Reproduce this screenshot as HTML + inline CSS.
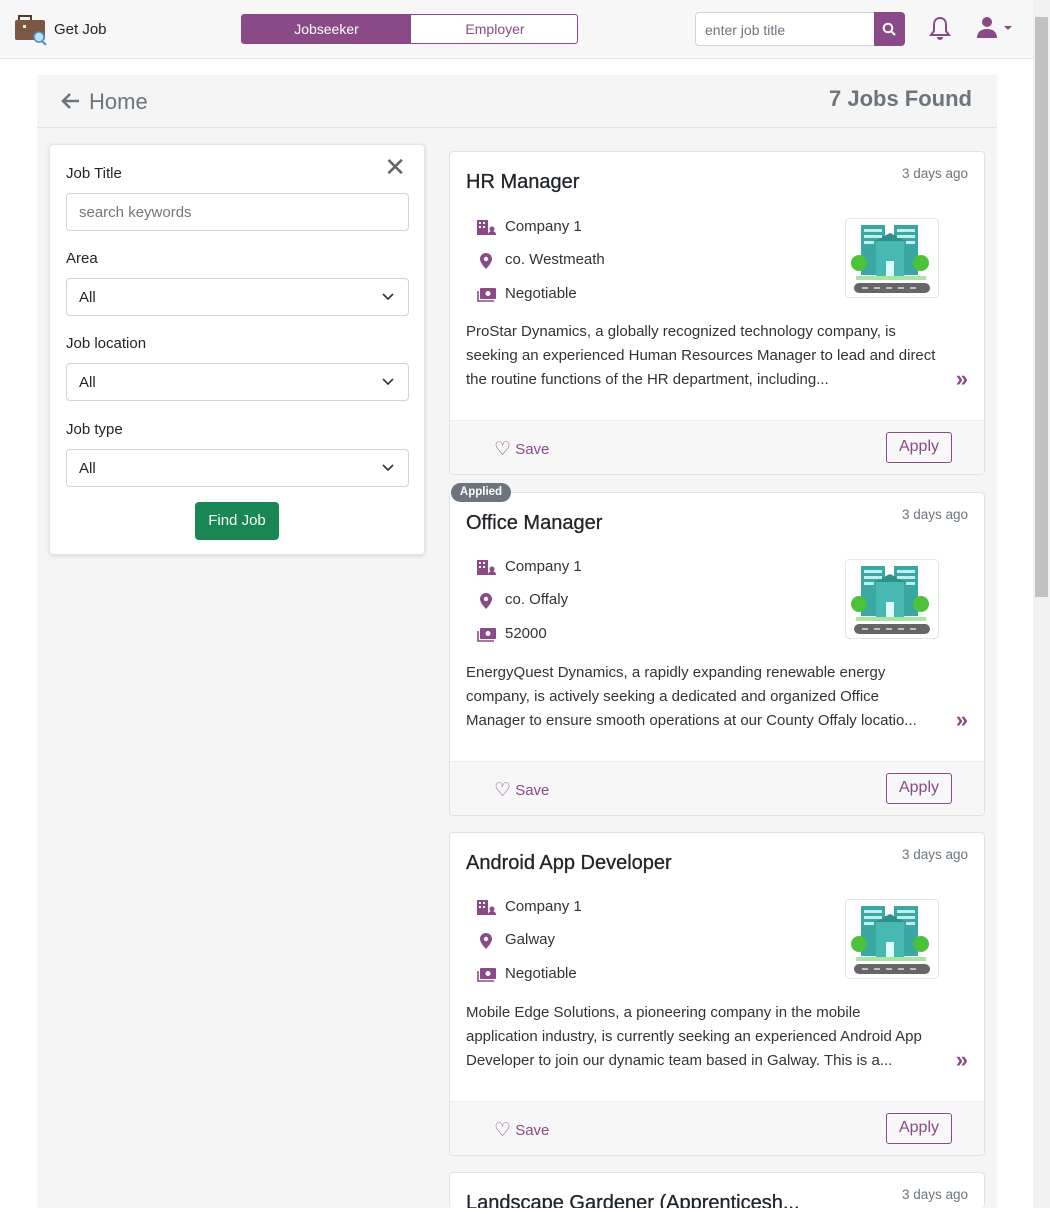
<!DOCTYPE html>
<html style="width:1050px;height:1208px;overflow:hidden"><head><meta charset="utf-8"><style>
*{box-sizing:border-box;margin:0;padding:0}
body{width:1050px;height:1208px;overflow:hidden;font-family:"Liberation Sans",sans-serif;background:#fff;color:#212529;position:relative}
.sb{position:absolute;right:0;top:0;width:17px;height:1208px;background:#f1f1f1;z-index:5}
.sb div{position:absolute;left:2px;top:17px;width:13px;height:580px;background:#c1c1c1}
.nav{position:absolute;left:0;top:0;width:1033px;height:59px;background:#f7f7f8;border-bottom:1px solid #e3e3e6}
.abs{position:absolute}
.main{position:absolute;left:37px;top:75px;width:960px;height:1133px;background:#f5f5f6}
.hdr{position:absolute;left:0;top:0;width:960px;height:53px;border-bottom:1px solid #e2e2e4}
.side{position:absolute;left:12px;top:69px;width:376px;height:411px;background:#fff;border:1px solid #e5e5e5;box-shadow:0 1px 4px rgba(0,0,0,.12);border-radius:4px}
.lbl{position:absolute;left:16px;font-size:15px;color:#212529}
.inp{position:absolute;left:16px;width:343px;height:38px;border:1px solid #ced4da;border-radius:4px;font-size:15px;padding:10px 12px;color:#212529}
.card{position:absolute;left:412px;width:536px;height:324px;background:#fff;border:1px solid #e0e0e0;border-radius:4px;overflow:hidden}
.card h2{position:absolute;left:16px;top:19px;font-size:20px;font-weight:normal;color:#212529;-webkit-text-stroke:.3px #212529}
.ago{position:absolute;right:16px;top:14px;font-size:13.5px;color:#6c757d}
.row{position:absolute;left:27px;font-size:15px;color:#333}
.row svg{position:absolute;left:0;top:1px}
.row span{position:absolute;left:28px;top:0;white-space:nowrap}
.desc{position:absolute;left:16px;top:168px;width:470px;font-size:15px;line-height:24px;color:#333;display:-webkit-box;-webkit-line-clamp:3;-webkit-box-orient:vertical;overflow:hidden;max-height:72px}
.chev{position:absolute;right:16px;top:214px;color:#8a4a87;font-size:22px;font-weight:bold}
.ft{position:absolute;left:0;bottom:0;width:534px;height:54px;background:#f7f7f8;border-top:1px solid #eee}
.save{position:absolute;left:44px;top:17px;font-size:15px;color:#8a4a87}
.save b{font-size:19px;font-weight:normal;vertical-align:-1px}
.apply{position:absolute;right:32px;top:11px;width:66px;height:31px;border:1px solid #8a4a87;border-radius:3px;font-size:16px;color:#8a4a87;text-align:center;line-height:28px}
.logo{position:absolute;right:45px;top:66px;width:94px;height:80px;border:1px solid #e6e6e6;border-radius:4px}
</style></head><body>
<div class="nav">
 <svg class="abs" style="left:14px;top:14px" width="34" height="32" viewBox="0 0 34 32"><rect x="5" y="2" width="12" height="5" fill="none" stroke="#5a3b2b" stroke-width="2"/><rect x="1" y="6" width="30" height="20" rx="2" fill="#7b5844"/><rect x="9" y="11" width="3" height="3" fill="#eee"/><circle cx="25" cy="23" r="5" fill="#bfe0f5" stroke="#4a90c8" stroke-width="1.5"/><line x1="28" y1="27" x2="32" y2="31" stroke="#4a90c8" stroke-width="2"/></svg>
 <div class="abs" style="left:54px;top:21px;font-size:15px">Get Job</div>
 <div class="abs" style="left:241px;top:14px;width:337px;height:30px;border:1px solid #8a4a87;border-radius:3px;background:#fff;overflow:hidden">
  <div class="abs" style="left:0;top:0;width:169px;height:30px;background:#8a4a87;color:#fff;font-size:14px;text-align:center;line-height:29px">Jobseeker</div>
  <div class="abs" style="left:169px;top:0;width:168px;height:30px;color:#8a4a87;font-size:14px;text-align:center;line-height:29px">Employer</div>
 </div>
 <div class="abs" style="left:695px;top:12px;width:180px;height:34px;border:1px solid #ced4da;border-right:none;border-radius:4px 0 0 4px;background:#fff;font-size:14px;color:#6c757d;padding:9px 9px">enter job title</div>
 <div class="abs" style="left:874px;top:12px;width:31px;height:34px;background:#8a4a87;border-radius:0 4px 4px 0"><svg style="position:absolute;left:8px;top:10px" width="15" height="15" viewBox="0 0 15 15"><circle cx="6" cy="6" r="4.3" fill="none" stroke="#fff" stroke-width="2"/><line x1="9" y1="9" x2="13" y2="13" stroke="#fff" stroke-width="2.2"/></svg></div>
 <svg class="abs" style="left:929px;top:16px" width="22" height="26" viewBox="0 0 22 26"><path d="M11 2c-4 0-6 3-6 7v6l-3 4h18l-3-4V9c0-4-2-7-6-7z" fill="none" stroke="#8a4a87" stroke-width="2"/><path d="M8 21a3 3 0 0 0 6 0z" fill="#8a4a87"/></svg>
 <svg class="abs" style="left:976px;top:16px" width="40" height="24" viewBox="0 0 40 24"><circle cx="11" cy="6" r="5" fill="#8a4a87"/><path d="M1 22c0-6 4-9 10-9s10 3 10 9z" fill="#8a4a87"/><path d="M28 10h8l-4 4z" fill="#8a4a87"/></svg>
</div>
<div class="main">
 <div class="hdr">
  <svg class="abs" style="left:23px;top:17px" width="20" height="18" viewBox="0 0 20 18"><path d="M19 9H3M10 2L3 9l7 7" fill="none" stroke="#6c757d" stroke-width="2.6"/></svg>
  <div class="abs" style="left:52px;top:14px;font-size:22px;color:#6c757d">Home</div>
  <div class="abs" style="right:25px;top:11px;font-size:22px;font-weight:bold;color:#6c757d">7 Jobs Found</div>
 </div>
 <div class="side">
  <div class="abs" style="right:18px;top:10px;font-size:26px;color:#666;line-height:24px">✕</div>
  <div class="lbl" style="top:20px">Job Title</div>
  <div class="inp" style="top:48px;color:#777">search keywords</div>
  <div class="lbl" style="top:105px">Area</div>
  <div class="inp" style="top:133px">All</div>
  <div class="lbl" style="top:190px">Job location</div>
  <div class="inp" style="top:218px">All</div>
  <div class="lbl" style="top:276px">Job type</div>
  <div class="inp" style="top:304px">All</div>
  <svg class="abs" style="left:332px;top:148px" width="12" height="8"><path d="M1 1l5 5 5-5" fill="none" stroke="#333" stroke-width="1.6"/></svg>
  <svg class="abs" style="left:332px;top:233px" width="12" height="8"><path d="M1 1l5 5 5-5" fill="none" stroke="#333" stroke-width="1.6"/></svg>
  <svg class="abs" style="left:332px;top:319px" width="12" height="8"><path d="M1 1l5 5 5-5" fill="none" stroke="#333" stroke-width="1.6"/></svg>
  <div class="abs" style="left:145px;top:357px;width:84px;height:38px;background:#198754;border-radius:4px;color:#fff;font-size:15px;text-align:center;line-height:38px">Find Job</div>
 </div>
</div>

<svg width="0" height="0" style="position:absolute"><defs>
<g id="bld"><rect x="15" y="4" width="24" height="50" fill="#3aa7a3"/><rect x="48" y="4" width="24" height="50" fill="#3aa7a3"/><rect x="30" y="18" width="28" height="40" fill="#48b8b2"/><path d="M28 20l16-8 16 8z" fill="#2f8f8b"/><rect x="40" y="40" width="8" height="18" fill="#dff"/><g fill="#bfeeee"><rect x="18" y="8" width="18" height="3"/><rect x="18" y="14" width="18" height="3"/><rect x="18" y="20" width="10" height="3"/><rect x="51" y="8" width="18" height="3"/><rect x="51" y="14" width="18" height="3"/><rect x="60" y="20" width="9" height="3"/></g><circle cx="13" cy="42" r="8" fill="#4cc23a"/><circle cx="75" cy="42" r="8" fill="#4cc23a"/><rect x="10" y="55" width="70" height="4" fill="#a6e6a0"/><rect x="8" y="62" width="76" height="10" rx="5" fill="#666"/><g stroke="#ddd" stroke-width="1.5"><line x1="16" y1="67" x2="22" y2="67"/><line x1="28" y1="67" x2="34" y2="67"/><line x1="40" y1="67" x2="46" y2="67"/><line x1="52" y1="67" x2="58" y2="67"/><line x1="64" y1="67" x2="70" y2="67"/></g></g>
<g id="ic1"><rect x="0" y="1" width="11" height="15" fill="#8a4a87"/><g fill="#fff"><rect x="2" y="3" width="2" height="2"/><rect x="6" y="3" width="2" height="2"/><rect x="2" y="7" width="2" height="2"/><rect x="6" y="7" width="2" height="2"/></g><circle cx="15" cy="10" r="2.5" fill="#8a4a87"/><path d="M11 16c0-3 2-4 4-4s4 1 4 4z" fill="#8a4a87"/></g>
<g id="ic2"><path d="M9 1a6 6 0 0 0-6 6c0 4 6 10 6 10s6-6 6-10a6 6 0 0 0-6-6z" fill="#8a4a87"/><circle cx="9" cy="7" r="2.2" fill="#fff"/></g>
<g id="ic3"><rect x="3" y="2" width="16" height="11" rx="1" fill="#8a4a87"/><circle cx="11" cy="7.5" r="2.5" fill="#fff"/><path d="M1 5v10h16" fill="none" stroke="#8a4a87" stroke-width="1.6"/></g>
</defs></svg>

<div class="card" style="left:449px;top:151px">
 <h2>HR Manager</h2><div class="ago">3 days ago</div>
 <div class="row" style="top:66px"><svg width="22" height="18"><use href="#ic1"/></svg><span>Company 1</span></div>
 <div class="row" style="top:99px"><svg width="22" height="18"><use href="#ic2"/></svg><span>co. Westmeath</span></div>
 <div class="row" style="top:133px"><svg width="22" height="18"><use href="#ic3"/></svg><span>Negotiable</span></div>
 <div class="logo"><svg width="92" height="78" viewBox="0 0 92 78"><use href="#bld" y="2"/></svg></div>
 <div class="desc">ProStar Dynamics, a globally recognized technology company, is seeking an experienced Human Resources Manager to lead and direct the routine functions of the HR department, including...</div>
 <div class="chev">»</div>
 <div class="ft"><div class="save"><b>♡</b> Save</div><div class="apply">Apply</div></div>
</div>
<div class="card" style="left:449px;top:492px">
 <h2>Office Manager</h2><div class="ago">3 days ago</div>
 <div class="row" style="top:65px"><svg width="22" height="18"><use href="#ic1"/></svg><span>Company 1</span></div>
 <div class="row" style="top:98px"><svg width="22" height="18"><use href="#ic2"/></svg><span>co. Offaly</span></div>
 <div class="row" style="top:132px"><svg width="22" height="18"><use href="#ic3"/></svg><span>52000</span></div>
 <div class="logo"><svg width="92" height="78" viewBox="0 0 92 78"><use href="#bld" y="2"/></svg></div>
 <div class="desc">EnergyQuest Dynamics, a rapidly expanding renewable energy company, is actively seeking a dedicated and organized Office Manager to ensure smooth operations at our County Offaly locatio...</div>
 <div class="chev">»</div>
 <div class="ft"><div class="save"><b>♡</b> Save</div><div class="apply">Apply</div></div>
</div>
<div class="abs" style="left:451px;top:483px;width:60px;height:19px;background:#6c757d;border-radius:10px;color:#fff;font-size:11.5px;font-weight:bold;text-align:center;line-height:19px">Applied</div>
<div class="card" style="left:449px;top:832px">
 <h2>Android App Developer</h2><div class="ago">3 days ago</div>
 <div class="row" style="top:65px"><svg width="22" height="18"><use href="#ic1"/></svg><span>Company 1</span></div>
 <div class="row" style="top:98px"><svg width="22" height="18"><use href="#ic2"/></svg><span>Galway</span></div>
 <div class="row" style="top:132px"><svg width="22" height="18"><use href="#ic3"/></svg><span>Negotiable</span></div>
 <div class="logo"><svg width="92" height="78" viewBox="0 0 92 78"><use href="#bld" y="2"/></svg></div>
 <div class="desc">Mobile Edge Solutions, a pioneering company in the mobile application industry, is currently seeking an experienced Android App Developer to join our dynamic team based in Galway. This is a...</div>
 <div class="chev">»</div>
 <div class="ft"><div class="save"><b>♡</b> Save</div><div class="apply">Apply</div></div>
</div>
<div class="card" style="left:449px;top:1172px;height:36px;border-bottom:none">
 <h2>Landscape Gardener (Apprenticesh...</h2><div class="ago">3 days ago</div>
</div>
<div class="sb"><div></div></div>
</body></html>
